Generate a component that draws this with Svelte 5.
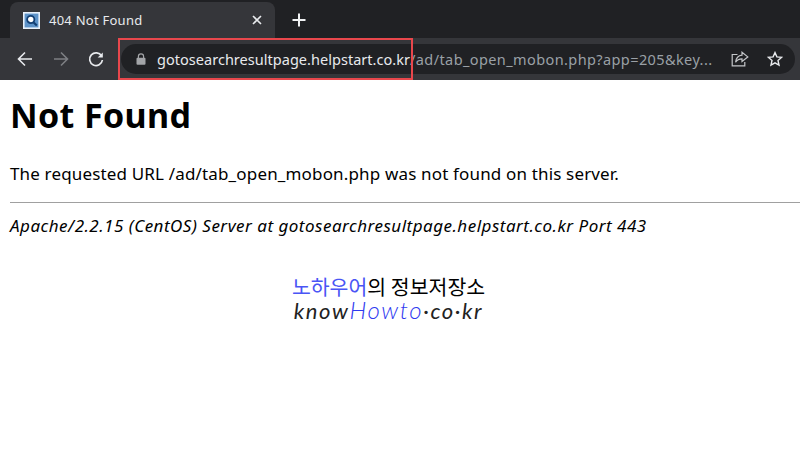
<script>
    const host = "gotosearchresultpage.helpstart.co.kr";
    const path = "/ad/tab_open_mobon.php";
</script>

<div class="browser">
    <div class="tabstrip">
        <div class="tab">
            <svg class="favicon" width="17" height="17" viewBox="0 0 16 16">
                <rect width="16" height="16" fill="#e8f1fb" />
                <rect x="1.5" y="1.5" width="13" height="13" fill="#5d93c9" />
                <circle cx="7.3" cy="7" r="3.4" fill="#fff" stroke="#123f73" stroke-width="1.7" />
                <path d="M10 9.8l3 3" stroke="#123f73" stroke-width="2" />
            </svg>
            <span class="tab-title">404 Not Found</span>
            <svg class="tab-close" width="10" height="10" viewBox="0 0 10 10">
                <path d="M1 1l8 8M9 1l-8 8" stroke="#e8eaed" stroke-width="1.6" />
            </svg>
        </div>
        <svg class="new-tab" width="14" height="14" viewBox="0 0 14 14">
            <path d="M7 .5v13M.5 7h13" stroke="#f1f3f4" stroke-width="2" />
        </svg>
    </div>

    <div class="toolbar">
        <svg class="nav" width="18" height="18" viewBox="0 0 18 18" fill="none" stroke="#e8eaed" stroke-width="1.6">
            <path d="M16 9H2.5M9 2.5L2.5 9 9 15.5" />
        </svg>
        <svg class="nav" width="18" height="18" viewBox="0 0 18 18" fill="none" stroke="#7d7f83" stroke-width="1.6">
            <path d="M2 9h13.5M9 2.5L15.5 9 9 15.5" />
        </svg>
        <svg class="nav" width="18" height="18" viewBox="0 0 18 18" fill="none" stroke="#e8eaed" stroke-width="1.7">
            <path d="M14.6 6A6.4 6.4 0 1 0 15.4 10" />
            <path d="M15.8 2.4v5.1h-5.1z" fill="#e8eaed" stroke="none" />
        </svg>
        <div class="omnibox">
            <svg class="lock" width="10" height="12" viewBox="0 0 10 12">
                <path d="M2.4 5V3.4a2.6 2.6 0 0 1 5.2 0V5" fill="none" stroke="#a3a5a8" stroke-width="1.2" />
                <rect y="4.8" x=".5" width="9" height="7" rx="1" fill="#a3a5a8" />
            </svg>
            <div class="url"><span class="host">{host}</span><span class="rest">{path}?app=205&amp;key...</span></div>
            <svg class="share" width="18" height="16" viewBox="0 0 18 16" fill="none" stroke="#c4c6c9" stroke-width="1.2">
                <path d="M6.5 3.5H1.2v11.3h12.6V11" />
                <path d="M11 1.2l5.8 4.7-5.8 4.6V7.8c-3 0-5 1-6.4 3.4C5 7.6 7.4 4.6 11 4.2z" />
            </svg>
            <svg class="star" width="16" height="16" viewBox="0 0 16 16" fill="none" stroke="#e8eaed" stroke-width="1.4">
                <path d="M8 1.6l1.9 4.3 4.6.5-3.5 3.1 1 4.6L8 11.8l-4 2.3 1-4.6-3.5-3.1 4.6-.5z" />
            </svg>
        </div>
        <div class="highlight"></div>
    </div>
</div>

<main class="page">
    <h1>Not Found</h1>
    <p>The requested URL {path} was not found on this server.</p>
    <hr />
    <address>Apache/2.2.15 (CentOS) Server at {host} Port 443</address>
    <div class="credit">
        <div class="credit-ko"><span class="blue">노하우어</span>의 정보저장소</div>
        <div class="credit-en">know<span class="blue big">Howto</span>·co·kr</div>
    </div>
</main>

<style>
    :global(body) {
        margin: 0;
        background: #fff;
        overflow: hidden;
    }
    .browser {
        font-family: "Noto Sans", "Noto Sans CJK KR", sans-serif;
    }
    .tabstrip {
        height: 38px;
        background: #202124;
        display: flex;
        align-items: flex-end;
        padding-left: 10px;
        box-sizing: border-box;
    }
    .tab {
        width: 265px;
        height: 36px;
        background: #35363a;
        border-radius: 8px 8px 0 0;
        display: flex;
        align-items: center;
        padding: 0 13px 0 13px;
        box-sizing: border-box;
    }
    .favicon {
        flex: none;
        margin-right: 9px;
    }
    .tab-title {
        flex: 1;
        color: #e8eaed;
        font-size: 13px;
        letter-spacing: 0.25px;
    }
    .new-tab {
        margin: 0 0 11px 17px;
    }
    .toolbar {
        position: relative;
        height: 42px;
        background: #35363a;
        display: flex;
        align-items: center;
        padding-left: 16px;
        box-sizing: border-box;
    }
    .nav {
        flex: none;
        margin-right: 17.5px;
    }
    .omnibox {
        flex: none;
        width: 674px;
        height: 30px;
        margin-left: -1.5px;
        border-radius: 15px;
        background: #202124;
        display: flex;
        align-items: center;
        padding: 0 12px 0 15px;
        box-sizing: border-box;
    }
    .lock {
        flex: none;
        margin-right: 11px;
    }
    .url {
        flex: 1;
        white-space: nowrap;
        font-size: 14.5px;
    }
    .host {
        color: #e8eaed;
        letter-spacing: 0.03px;
    }
    .rest {
        color: #9aa0a6;
        letter-spacing: 0.4px;
    }
    .share {
        margin-right: 18px;
    }
    .highlight {
        position: absolute;
        left: 118px;
        top: 0;
        width: 295px;
        height: 42px;
        border: 2px solid #e8474c;
        box-sizing: border-box;
    }
    .page {
        font-family: "Noto Sans", "Noto Sans CJK KR", sans-serif;
        color: #000;
        padding-top: 12px;
    }
    h1 {
        margin: 0 0 0 10px;
        font-size: 34px;
        font-weight: 700;
        line-height: 46px;
        letter-spacing: 0.35px;
    }
    p {
        margin: 24px 0 0 10px;
        font-size: 17px;
        line-height: 24px;
        letter-spacing: 0.16px;
    }
    hr {
        margin: 16px 0 0 10px;
        border: none;
        height: 1px;
        background: #a0a0a0;
    }
    address {
        margin: 11px 0 0 10px;
        font-size: 17px;
        line-height: 24px;
        font-style: italic;
        letter-spacing: 0.5px;
    }
    .credit {
        margin: 36px 0 0 -23px;
        text-align: center;
    }
    .credit-ko {
        font-family: "Noto Sans CJK KR", sans-serif;
        font-size: 20.5px;
        line-height: 24px;
    }
    .credit-en {
        font-family: "Lato", sans-serif;
        font-style: italic;
        color: #222;
        font-size: 22px;
        line-height: 24px;
        letter-spacing: 1.6px;
    }
    .blue {
        color: #4a55f5;
    }
    .big {
        color: #2f3af0;
        font-size: 24px;
        font-weight: 300;
        line-height: 1;
    }
</style>
